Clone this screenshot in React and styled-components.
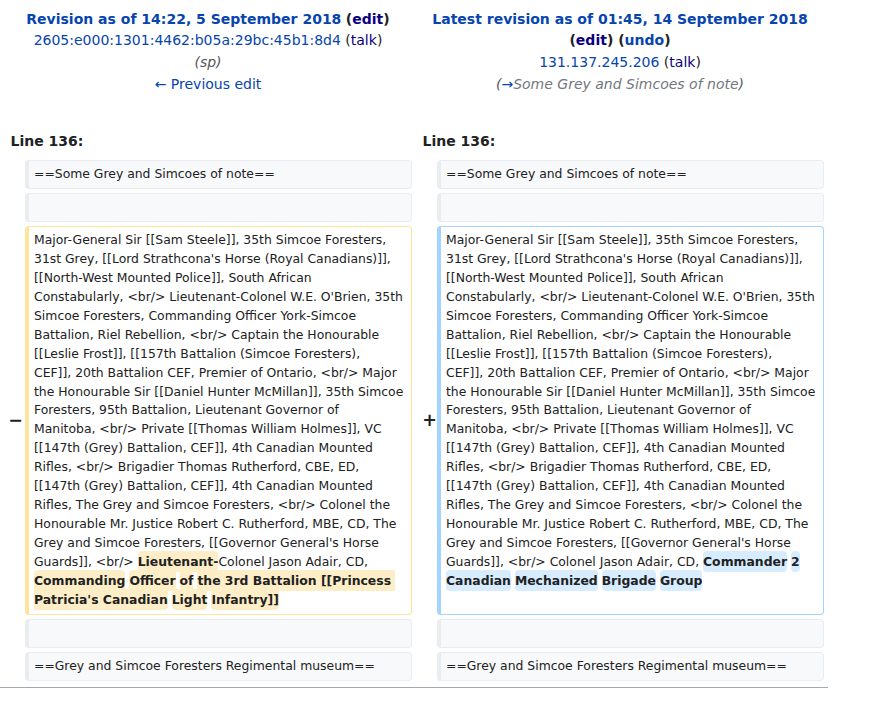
import React from "react";
import styled, { createGlobalStyle } from "styled-components";

const Global = createGlobalStyle`
  html, body { margin: 0; padding: 0; background: #fff; }
  body { font-family: "DejaVu Sans", sans-serif; color: #202122; }
`;

const Diff = styled.div`
  display: grid;
  grid-template-columns: 17px 387px 17px 387px;
  gap: 4px;
  padding: 4px 4px 6px;
  width: 828px;
  box-sizing: border-box;
  border-bottom: 1px solid #a2a9b1;
`;

const HeaderCell = styled.div`
  grid-column: ${(p) => (p.$side === "right" ? "3 / span 2" : "1 / span 2")};
  text-align: center;
  font-size: 14px;
  line-height: 21.7px;
  padding-top: 4.6px;
`;

const HLine = styled.div``;

const TitleLink = styled.a`
  color: #0645ad;
  font-weight: bold;
  text-decoration: none;
`;

const Strong = styled.span`
  font-weight: bold;
  color: #202122;
`;

const Link = styled.a`
  color: #0645ad;
  text-decoration: none;
`;

const Visited = styled.a`
  color: #0b0080;
  text-decoration: none;
`;

const Comment = styled.span`
  font-style: italic;
  color: #54595d;
`;

const AutoComment = styled.span`
  color: #72777d;
`;

const LineNo = styled.div`
  grid-column: ${(p) => (p.$side === "right" ? "3 / span 2" : "1 / span 2")};
  font-weight: bold;
  font-size: 14px;
  line-height: 22.4px;
  padding: 30.6px 0 3.6px 6.5px;
`;

const Marker = styled.div`
  grid-column: ${(p) => (p.$side === "right" ? 3 : 1)};
  display: flex;
  align-items: center;
  justify-content: flex-end;
  font-weight: bold;
  font-size: 17.5px;
  line-height: 1;
  margin-right: ${(p) => p.$shift || 0}px;
`;

const borderColors = {
  context: "#eaecf0",
  deleted: "#ffe49c",
  added: "#a3d3ff",
};

const Box = styled.div`
  grid-column: ${(p) => (p.$side === "right" ? 4 : 2)};
  font-size: 12.4px;
  line-height: 18.95px;
  padding: 4px 2px 4px 5px;
  border: 1px solid ${(p) => borderColors[p.$kind]};
  border-left-width: 4px;
  border-radius: 4px;
  background: ${(p) => (p.$kind === "context" ? "#f8f9fa" : "#fff")};
  white-space: pre-wrap;
  word-wrap: break-word;
  color: #202122;
`;

const Change = styled.span`
  font-weight: bold;
  background: ${(p) => (p.$kind === "added" ? "#d8ecff" : "#feeec8")};
  border-radius: 4px;
  padding: 0.25em 0;
`;

const commonLines = [
  "Major-General Sir [[Sam Steele]], 35th Simcoe Foresters,",
  "31st Grey, [[Lord Strathcona's Horse (Royal Canadians)]],",
  "[[North-West Mounted Police]], South African",
  "Constabularly, <br/> Lieutenant-Colonel W.E. O'Brien, 35th",
  "Simcoe Foresters, Commanding Officer York-Simcoe",
  "Battalion, Riel Rebellion, <br/> Captain the Honourable",
  "[[Leslie Frost]], [[157th Battalion (Simcoe Foresters),",
  "CEF]], 20th Battalion CEF, Premier of Ontario, <br/> Major",
  "the Honourable Sir [[Daniel Hunter McMillan]], 35th Simcoe",
  "Foresters, 95th Battalion, Lieutenant Governor of",
  "Manitoba, <br/> Private [[Thomas William Holmes]], VC",
  "[[147th (Grey) Battalion, CEF]], 4th Canadian Mounted",
  "Rifles, <br/> Brigadier Thomas Rutherford, CBE, ED,",
  "[[147th (Grey) Battalion, CEF]], 4th Canadian Mounted",
  "Rifles, The Grey and Simcoe Foresters, <br/> Colonel the",
  "Honourable Mr. Justice Robert C. Rutherford, MBE, CD, The",
  "Grey and Simcoe Foresters, [[Governor General's Horse",
];

const common = commonLines.join(" \n") + " \nGuards]], <br/> ";

export default function App() {
  return (
    <>
      <Global />
      <Diff>
        <HeaderCell $side="left">
          <HLine>
            <TitleLink>Revision as of 14:22, 5 September 2018</TitleLink>{" "}
            <Strong>
              (<Visited>edit</Visited>)
            </Strong>
          </HLine>
          <HLine>
            <Link>2605:e000:1301:4462:b05a:29bc:45b1:8d4</Link> (<Visited>talk</Visited>)
          </HLine>
          <HLine>
            <Comment>(sp)</Comment>
          </HLine>
          <HLine>
            <Link>← Previous edit</Link>
          </HLine>
        </HeaderCell>
        <HeaderCell $side="right">
          <HLine>
            <TitleLink>Latest revision as of 01:45, 14 September 2018</TitleLink>
          </HLine>
          <HLine>
            <Strong>
              (<Visited>edit</Visited>) (<Link>undo</Link>)
            </Strong>
          </HLine>
          <HLine>
            <Link>131.137.245.206</Link> (<Visited>talk</Visited>)
          </HLine>
          <HLine>
            <Comment>
              (<AutoComment><Link>→</Link>Some Grey and Simcoes of note</AutoComment>)
            </Comment>
          </HLine>
        </HeaderCell>

        <LineNo $side="left">Line 136:</LineNo>
        <LineNo $side="right">Line 136:</LineNo>

        <Box $side="left" $kind="context">==Some Grey and Simcoes of note==</Box>
        <Box $side="right" $kind="context">==Some Grey and Simcoes of note==</Box>

        <Box $side="left" $kind="context">{"\u00a0"}</Box>
        <Box $side="right" $kind="context">{"\u00a0"}</Box>

        <Marker $side="left" $shift={-2}>−</Marker>
        <Box $side="left" $kind="deleted">
          {common}
          <Change $kind="deleted">Lieutenant-</Change>
          {"Colonel Jason Adair, CD, \n"}
          <Change $kind="deleted">Commanding</Change> <Change $kind="deleted">Officer</Change>{" "}
          <Change $kind="deleted">of</Change>{" "}
          <Change $kind="deleted">{"the 3rd Battalion [[Princess \nPatricia's Canadian"}</Change>{" "}
          <Change $kind="deleted">Light</Change> <Change $kind="deleted">Infantry]]</Change>
        </Box>
        <Marker $side="right" $shift={-4}>+</Marker>
        <Box $side="right" $kind="added">
          {common}
          {"Colonel Jason Adair, CD, "}
          <Change $kind="added">Commander</Change> <Change $kind="added">2</Change>
          {" \n"}
          <Change $kind="added">Canadian</Change> <Change $kind="added">Mechanized</Change>{" "}
          <Change $kind="added">Brigade</Change> <Change $kind="added">Group</Change>
        </Box>

        <Box $side="left" $kind="context">{"\u00a0"}</Box>
        <Box $side="right" $kind="context">{"\u00a0"}</Box>

        <Box $side="left" $kind="context">==Grey and Simcoe Foresters Regimental museum==</Box>
        <Box $side="right" $kind="context">==Grey and Simcoe Foresters Regimental museum==</Box>
      </Diff>
    </>
  );
}
